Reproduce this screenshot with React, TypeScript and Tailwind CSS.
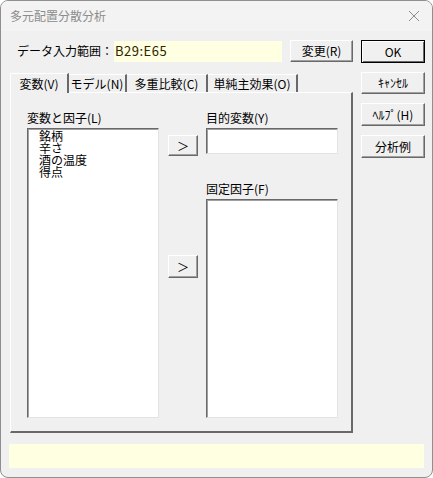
import React from 'react';

const font = { fontFamily: '"Noto Sans CJK JP", "Noto Sans", sans-serif' };

const Btn = ({ label, primary }: { label: string; primary?: boolean }) => (
  <div
    className={
      'w-full h-full flex items-center justify-center whitespace-nowrap bg-[#f0f0f0] text-[12px] text-black leading-none ' +
      (primary
        ? 'border border-black shadow-[inset_1px_1px_0_#ffffff,inset_-1px_-1px_0_#696969]'
        : 'border border-t-white border-l-white border-r-[#696969] border-b-[#696969] shadow-[inset_-1px_-1px_0_#a0a0a0]')
    }
  >
    {label}
  </div>
);

// sunken white field
const Field = ({ className, children }: { className: string; children?: React.ReactNode }) => (
  <div
    className={
      'bg-white border border-t-[#696969] border-l-[#696969] border-r-[#e3e3e3] border-b-[#e3e3e3] shadow-[inset_1px_1px_0_#a0a0a0] ' +
      className
    }
  >
    {children}
  </div>
);

const tabs = [
  { t: '変数(V)', w: 'w-[59px]' },
  { t: 'モデル(N)', w: 'w-[58px]' },
  { t: '多重比較(C)', w: 'w-[81px]' },
  { t: '単純主効果(O)', w: 'w-[90px]' },
];
const items = ['銘柄', '辛さ', '酒の温度', '得点'];

export default function App() {
  return (
    <div style={font} className="w-[433px] h-[478px] bg-[#f0f0f0] border border-[#8f8f8f] rounded-[8px] overflow-hidden flex flex-col">
      {/* title bar */}
      <div className="h-[30px] flex items-center justify-between pl-[9px] pr-[12px] bg-[#f3f3f3]">
        <span className="text-[12px] text-[#8c8c8c]">多元配置分散分析</span>
        <svg width="12" height="12" viewBox="0 0 12 12">
          <path d="M1 1 L11 11 M11 1 L1 11" stroke="#8c8c8c" strokeWidth="1" />
        </svg>
      </div>

      <div className="flex pt-[9px] pl-[9px]">
        {/* left side */}
        <div className="w-[343px] flex flex-col">
          <div className="h-[22px] flex items-center">
            <span className="w-[104px] pl-[7px] whitespace-nowrap text-[12px] text-black">データ入力範囲：</span>
            <div className="w-[168px] h-[21px] bg-[#ffffe1] flex items-center pl-[1px] text-[13px] text-[#2b2500] tracking-[0.5px]">
              B29:E65
            </div>
            <div className="ml-[8px] w-[63px] h-[22px]">
              <Btn label="変更(R)" />
            </div>
          </div>

          {/* tab strip */}
          <div className="mt-[10px] h-[20px] flex items-end text-[12px] text-black whitespace-nowrap">
            {tabs.map((tab, i) => (
              <div
                key={tab.t}
                className={
                  tab.w +
                  (i === 0
                    ? ' h-[20px] flex items-center justify-center bg-[#f0f0f0] border-t border-l border-white border-r-2 border-r-[#696969] relative z-10 -mb-px'
                    : ' h-[18px] flex items-center justify-center border-t border-white border-r-2 border-r-[#696969]')
                }
              >
                {tab.t}
              </div>
            ))}
          </div>

          {/* tab page */}
          <div className="h-[341px] border border-t-white border-l-white border-r-2 border-r-[#696969] border-b-2 border-b-[#696969] flex pt-[18px] pl-[16px]">
            <div className="flex flex-col">
              <div className="h-[17px] text-[12px] leading-[13px] text-black">変数と因子(L)</div>
              <Field className="w-[132px] h-[290px] pl-[11px] pt-[1px]">
                {items.map((it) => (
                  <div key={it} className="text-[12px] leading-[12px] text-black">
                    {it}
                  </div>
                ))}
              </Field>
            </div>

            <div className="ml-[9px] w-[30px] flex flex-col pt-[24px]">
              <div className="h-[21px]">
                <Btn label="＞" />
              </div>
              <div className="mt-[99px] h-[23px]">
                <Btn label="＞" />
              </div>
            </div>

            <div className="ml-[8px] flex flex-col">
              <div className="h-[17px] text-[12px] leading-[13px] text-black">目的変数(Y)</div>
              <Field className="w-[132px] h-[26px]" />
              <div className="mt-[28px] h-[17px] text-[12px] leading-[13px] text-black">固定因子(F)</div>
              <Field className="w-[132px] h-[219px]" />
            </div>
          </div>
        </div>

        {/* right buttons */}
        <div className="ml-[8px] w-[64px] flex flex-col">
          <div className="h-[23px]"><Btn label="OK" primary /></div>
          <div className="mt-[9px] h-[22px]"><Btn label="ｷｬﾝｾﾙ" /></div>
          <div className="mt-[9px] h-[23px]"><Btn label="ﾍﾙﾌﾟ(H)" /></div>
          <div className="mt-[9px] h-[23px]"><Btn label="分析例" /></div>
        </div>
      </div>

      {/* status bar */}
      <div className="mt-[11px] mx-[8px] h-[24px] bg-[#ffffe1]" />
    </div>
  );
}
